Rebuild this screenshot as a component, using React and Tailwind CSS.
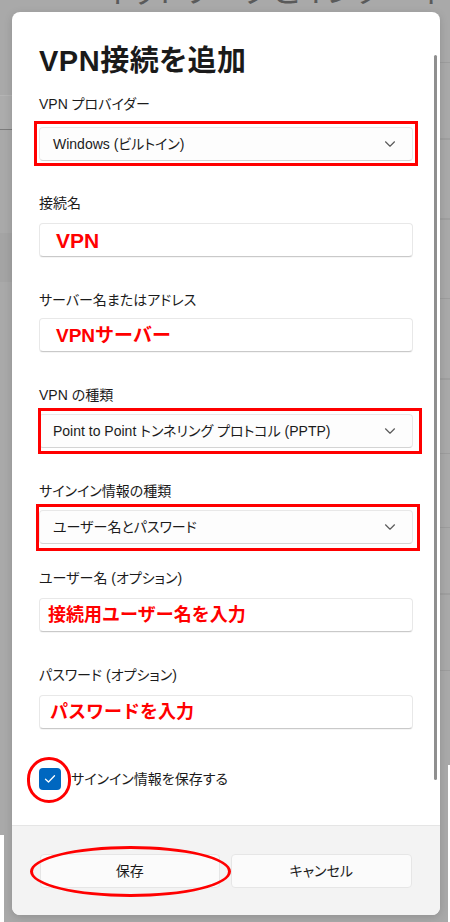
import React from "react";

const font = "font-['Liberation_Sans','Noto_Sans_CJK_JP',sans-serif] [font-feature-settings:'palt']";
const redFont = "font-['Liberation_Sans','Noto_Sans_CJK_JP',sans-serif] [font-feature-settings:normal]";

function Chevron() {
  return (
    <svg width="12" height="8" viewBox="0 0 12 8" fill="none" className="shrink-0">
      <path d="M1.5 1.8 L6 6.2 L10.5 1.8" stroke="#5c5c5c" strokeWidth="1.2" strokeLinecap="round" strokeLinejoin="round" />
    </svg>
  );
}

function Dropdown({ text, box }) {
  return (
    <div className="relative">
      <div className="h-[34px] rounded-[4px] border border-[#e8e8e8] border-b-[#d4d4d4] bg-[#fdfdfd] flex items-center justify-between pl-[13px] pr-[16px] text-[14px] text-[#1b1b1b]">
        <span>{text}</span>
        <Chevron />
      </div>
      <div className={`absolute border-[3px] border-[#ff0000] pointer-events-none ${box}`} />
    </div>
  );
}

function Input({ text, pl, size }) {
  return (
    <div className={`h-[34px] rounded-[4px] border border-[#e8e8e8] border-b-[#c9c9c9] bg-white flex items-center ${pl} shadow-[0_1px_0_rgba(0,0,0,0.04)]`}>
      <span className={`${redFont} font-bold ${size} leading-none text-[#ff0000]`}>{text}</span>
    </div>
  );
}

function Label({ children, mt, mb }) {
  return (
    <div className={`h-[20px] leading-[20px] text-[14px] text-[#1b1b1b] ${mt} ${mb}`}>{children}</div>
  );
}

export default function App() {
  return (
    <div className={`relative w-[450px] h-[922px] overflow-hidden bg-[#a9a9a9] ${font}`}>
      {/* dimmed background window */}
      <div className="flex h-full">
        <div className="w-[12px] flex flex-col">
          <div className="h-[95px]" />
          <div className="h-[34px] border-t border-[#b4b4b4] bg-[#acacac]" />
          <div className="h-[104px] border-t border-[#7c7c7c]" />
          <div className="h-[49px] bg-[#a4a4a4]" />
          <div className="h-[553px]" />
          <div className="flex-1 flex">
            <div className="w-[4px] bg-white" />
            <div className="flex-1" />
          </div>
        </div>
        <div className="flex-1 h-[12px] overflow-hidden">
          <div className="mt-[-27px] pl-[90px] text-[32px] leading-[36px] text-[#5a5a5a] whitespace-nowrap">ネットワークとインターネット</div>
        </div>
        <div className="w-[10px] flex flex-col">
          <div className="h-[62px]" />
          <div className="h-[76px] border-t border-[#9d9d9d]" />
          <div className="h-[80px] border-t-2 border-[#9f9f9f]" />
          <div className="h-[80px] border-t-2 border-[#9f9f9f]" />
          <div className="h-[80px] border-t border-[#9d9d9d]" />
          <div className="h-[75px] border-t-2 border-[#9f9f9f]" />
          <div className="h-[74px] border-t border-[#9d9d9d]" />
          <div className="h-[66px] border-t border-[#9d9d9d]" />
          <div className="h-[77px] border-t-2 border-[#9f9f9f]" />
          <div className="h-[95px] border-t border-[#9d9d9d]" />
          <div className="flex-1 flex">
            <div className="flex-1" />
            <div className="w-[2px] bg-white" />
          </div>
        </div>
      </div>

      {/* dialog */}
      <div className="absolute left-[12px] top-[12px] w-[428px] h-[903px] rounded-[8px] overflow-hidden bg-white flex flex-col shadow-[0_2px_8px_rgba(0,0,0,0.15)]">
        <div className="relative flex-1 px-[27px] pt-[29px]">
          <div className="h-[40px] leading-[40px] text-[29px] font-bold text-[#1a1a1a] tracking-[0.5px]">VPN接続を追加</div>

          <Label mt="mt-[13px]" mb="mb-[13px]">VPN プロバイダー</Label>
          <Dropdown text="Windows (ビルトイン)" box="left-[-5px] right-[-5px] top-[-6px] bottom-[-5px]" />

          <Label mt="mt-[32px]" mb="mb-[10px]">接続名</Label>
          <Input text="VPN" pl="pl-[16px]" size="text-[21px]" />

          <Label mt="mt-[33px]" mb="mb-[8px]">サーバー名またはアドレス</Label>
          <Input text="VPNサーバー" pl="pl-[16px]" size="text-[19px]" />

          <Label mt="mt-[33px]" mb="mb-[9px]">VPN の種類</Label>
          <Dropdown text="Point to Point トンネリング プロトコル (PPTP)" box="left-[-1px] right-[-9px] top-[-6px] bottom-[-6px]" />

          <Label mt="mt-[33px]" mb="mb-[9px]">サインイン情報の種類</Label>
          <Dropdown text="ユーザー名とパスワード" box="left-[-3px] right-[-7px] top-[-6px] bottom-[-7px]" />

          <Label mt="mt-[24px]" mb="mb-[10px]">ユーザー名 (オプション)</Label>
          <Input text="接続用ユーザー名を入力" pl="pl-[8px]" size="text-[18px]" />

          <Label mt="mt-[33px]" mb="mb-[10px]">パスワード (オプション)</Label>
          <Input text="パスワードを入力" pl="pl-[10px]" size="text-[18px]" />

          <div className="mt-[39px] flex items-center h-[22px]">
            <div className="relative">
              <div className="w-[22px] h-[22px] rounded-[4px] bg-[#0067c0] flex items-center justify-center">
                <svg width="12" height="10" viewBox="0 0 12 10" fill="none">
                  <path d="M1.5 5.2 L4.5 8 L10.5 1.8" stroke="white" strokeWidth="1.3" strokeLinecap="round" strokeLinejoin="round" />
                </svg>
              </div>
              <div className="absolute left-[-12px] top-[-11px] w-[44px] h-[46px] rounded-full border-[3px] border-[#ff0000]" />
            </div>
            <span className="ml-[10px] text-[14px] text-[#1b1b1b]">サインイン情報を保存する</span>
          </div>

          <div className="absolute right-[3px] top-[43px] w-[3px] h-[725px] rounded-full bg-[#8f8f8f]" />
        </div>

        <div className="h-[90px] shrink-0 border-t border-[#e5e5e5] bg-[#f3f3f3] flex items-start gap-[11px] px-[28px] pt-[28px]">
          <div className="relative flex-1 h-[34px]">
            <div className="h-[34px] rounded-[4px] border border-[#e6e6e6] bg-[#fbfbfb] flex items-center justify-center text-[14px] text-[#1b1b1b]">保存</div>
            <div className="absolute left-[-10px] right-[-11px] top-[-8px] bottom-[-9px] rounded-[50%] border-[3px] border-[#ff0000]" />
          </div>
          <div className="flex-1 h-[34px] rounded-[4px] border border-[#e6e6e6] bg-[#fbfbfb] flex items-center justify-center text-[14px] text-[#1b1b1b]">キャンセル</div>
        </div>
      </div>
    </div>
  );
}
